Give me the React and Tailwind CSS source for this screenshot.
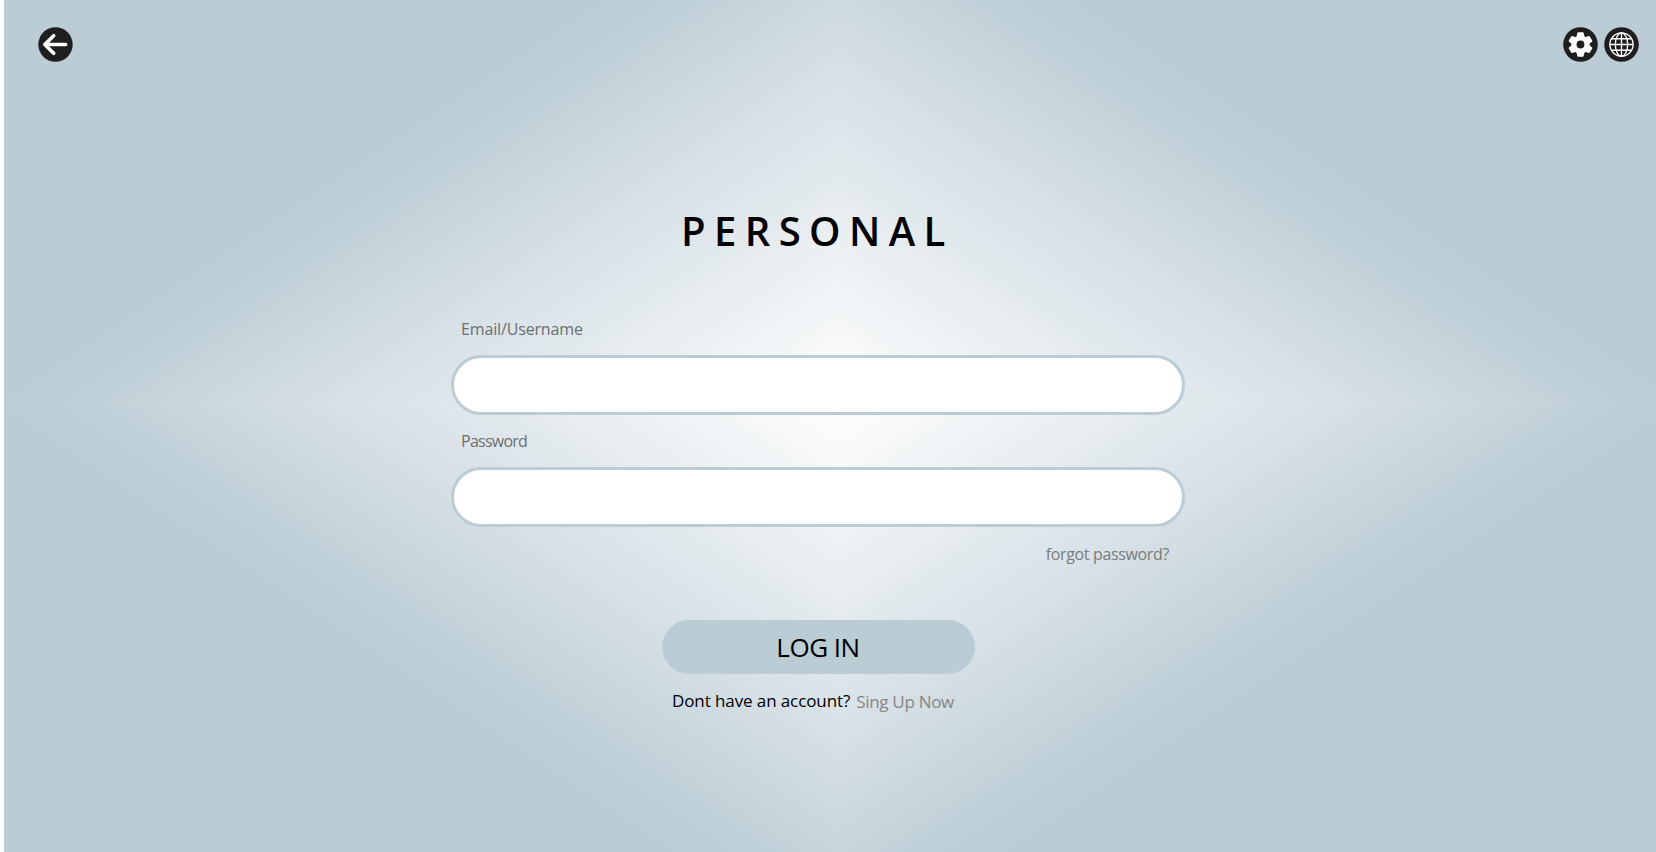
import React from "react";

const BASE = "#bbccd5";

function Diamond() {
  const w = 845;
  const h = 562;
  const cx = 839;
  const cy = 403;
  const k = (w * h) / (w * w + h * h);
  const quads = [
    [1, 1],
    [-1, 1],
    [1, -1],
    [-1, -1],
  ];
  return (
    <svg className="absolute inset-0 h-full w-full" viewBox="0 0 1656 852" preserveAspectRatio="none" shapeRendering="crispEdges">
      <defs>
        {quads.map(([sx, sy], i) => (
          <linearGradient key={i} id={"q" + i} gradientUnits="userSpaceOnUse" x1={cx} y1={cy} x2={cx + sx * k * h} y2={cy + sy * k * w}>
            <stop offset="0" stopColor="#fefefe" />
            <stop offset="0.6" stopColor="#d6e0e6" />
            <stop offset="0.94" stopColor="#bdced6" />
            <stop offset="1" stopColor={BASE} />
          </linearGradient>
        ))}
      </defs>
      {quads.map(([sx, sy], i) => (
        <rect key={i} x={sx > 0 ? cx : cx - 1000} y={sy > 0 ? cy : cy - 1000} width="1000" height="1000" fill={"url(#q" + i + ")"} />
      ))}
    </svg>
  );
}

function BackIcon() {
  return (
    <svg className="size-[35px]" viewBox="0 0 35 35" fill="none">
      <circle cx="17.5" cy="17.5" r="17.2" fill="#1e1e1e" />
      <path d="M27.7 17.5H6.8M15.7 8.7L6.8 17.5L15.7 26.3" stroke="#fff" strokeWidth="3.6" strokeLinecap="round" strokeLinejoin="round" />
    </svg>
  );
}

function GearIcon() {
  return (
    <svg className="size-[35px]" viewBox="0 0 34 34">
      <circle cx="17" cy="17" r="16.8" fill="#1e1e1e" />
      <g fill="#fff" stroke="#fff" strokeWidth="1.6" strokeLinejoin="round">
        <circle cx="17" cy="17" r="8" />
        {[0, 60, 120].map((a) => (
          <path key={a} transform={`rotate(${a} 17 17)`} d="M14.7 6h4.6l1 4.3v13.4l-1 4.3h-4.6l-1-4.3v-13.4z" />
        ))}
      </g>
      <circle cx="17" cy="17" r="3.8" fill="#1e1e1e" />
    </svg>
  );
}

function GlobeIcon() {
  return (
    <svg className="size-[35px]" viewBox="0 0 34 34" fill="none">
      <circle cx="17" cy="17" r="16.8" fill="#1e1e1e" />
      <g stroke="#fff" strokeWidth="1.3">
        <circle cx="17" cy="17" r="11.3" />
        <ellipse cx="17" cy="17" rx="6" ry="11.3" />
        <path d="M17 5.7v22.6M5.7 17h22.6M7.4 11.4h19.2M7.4 22.6h19.2" />
      </g>
    </svg>
  );
}

function Field({ label, type, spacing }) {
  return (
    <label className="block">
      <span className={"block h-[38px] pl-[10px] text-[16px] leading-6 font-medium text-[#6b6f72] " + spacing}>{label}</span>
      <input type={type} className="block h-[60px] w-full rounded-full border-3 border-[#bbccd5] bg-white px-6 outline-none" />
    </label>
  );
}

export default function App() {
  return (
    <div className="relative h-[852px] w-[1656px] overflow-hidden font-['Trebuchet_MS','Open_Sans',sans-serif]">
      <Diamond />
      <div className="relative flex h-full flex-col border-l-4 border-white">
        <header className="flex h-[71px] items-start justify-between pt-[27px] pr-[17px] pl-[34px]">
          <button aria-label="Back"><BackIcon /></button>
          <div className="flex gap-[6px]">
            <button aria-label="Settings"><GearIcon /></button>
            <button aria-label="Language"><GlobeIcon /></button>
          </div>
        </header>
        <main className="ml-[447px] flex w-[734px] flex-col pt-[134px]">
          <h1 className="h-[112px] pl-[230px] text-[40px] leading-[52px] font-semibold tracking-[8.4px] text-black">PERSONAL</h1>
          <div className="flex flex-col gap-[14px]">
            <Field label="Email/Username" type="text" spacing="tracking-[-0.15px]" />
            <Field label="Password" type="password" spacing="tracking-[-0.75px]" />
          </div>
          <a className="mt-[15px] mr-[16px] self-end text-[16px] leading-6 font-medium tracking-[-0.35px] text-[#7b7b7b]">forgot password?</a>
          <button className="mt-[54px] h-[54px] w-[313px] self-center rounded-full bg-[#bbccd5] text-[26px] tracking-[-0.5px] text-black">LOG IN</button>
          <p className="mt-[15px] ml-[221px] flex gap-[6px] text-[17px] leading-6 tracking-[-0.1px] whitespace-nowrap text-black">
            <span>Dont have an account?</span>
            <a className="pt-px tracking-[-0.3px] text-[#858585]">Sing Up Now</a>
          </p>
        </main>
      </div>
    </div>
  );
}
